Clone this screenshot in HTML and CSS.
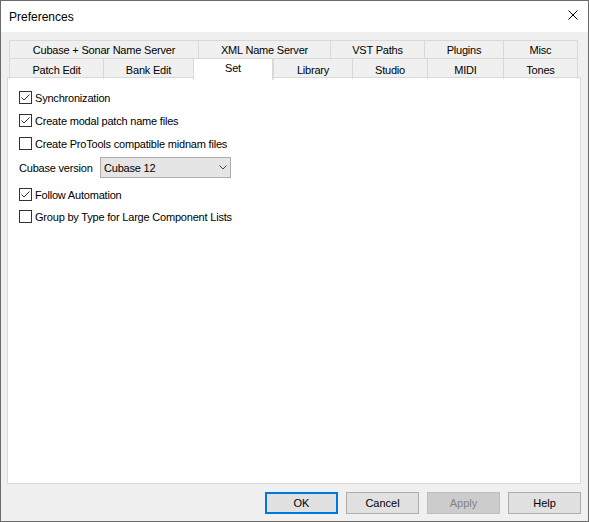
FILE: index.html
```html
<!DOCTYPE html>
<html>
<head>
<meta charset="utf-8">
<title>Preferences</title>
<link rel="stylesheet" href="styles.css">
</head>
<body>
<div class="window">
  <div class="titlebar">
    <span class="title">Preferences</span>
    <svg class="close" width="10" height="10" viewBox="0 0 10 10"><path d="M0.5 0.5 L9.5 9.5 M9.5 0.5 L0.5 9.5" stroke="#000" stroke-width="1" fill="none"/></svg>
  </div>
  <div class="content">
    <div class="tabs">
      <div class="tabrow row1">
        <div class="tab">Cubase + Sonar Name Server</div>
        <div class="tab">XML Name Server</div>
        <div class="tab">VST Paths</div>
        <div class="tab">Plugins</div>
        <div class="tab last">Misc</div>
      </div>
      <div class="tabrow row2">
        <div class="tab">Patch Edit</div>
        <div class="tab">Bank Edit</div>
        <div class="tab selected">Set</div>
        <div class="tab">Library</div>
        <div class="tab">Studio</div>
        <div class="tab">MIDI</div>
        <div class="tab last">Tones</div>
      </div>
    </div>
    <div class="panel">
      <div class="check r1">
        <span class="box"><svg width="11" height="11" viewBox="0 0 11 11"><path d="M1.5 5.5 L4 8 L9.5 2.5" stroke="#333" stroke-width="1" fill="none"/></svg></span>
        <span>Synchronization</span>
      </div>
      <div class="check r2">
        <span class="box"><svg width="11" height="11" viewBox="0 0 11 11"><path d="M1.5 5.5 L4 8 L9.5 2.5" stroke="#333" stroke-width="1" fill="none"/></svg></span>
        <span>Create modal patch name files</span>
      </div>
      <div class="check r3">
        <span class="box"></span>
        <span>Create ProTools compatible midnam files</span>
      </div>
      <div class="combo-row">
        <span class="combo-label">Cubase version</span>
        <div class="combo">
          <span>Cubase 12</span>
          <svg class="chev" width="8" height="5" viewBox="0 0 8 5"><path d="M0.5 0.5 L4 4 L7.5 0.5" stroke="#444" stroke-width="1" fill="none"/></svg>
        </div>
      </div>
      <div class="check r4">
        <span class="box"><svg width="11" height="11" viewBox="0 0 11 11"><path d="M1.5 5.5 L4 8 L9.5 2.5" stroke="#333" stroke-width="1" fill="none"/></svg></span>
        <span>Follow Automation</span>
      </div>
      <div class="check r5">
        <span class="box"></span>
        <span>Group by Type for Large Component Lists</span>
      </div>
    </div>
    <div class="buttons">
      <button class="btn default">OK</button>
      <button class="btn">Cancel</button>
      <button class="btn disabled">Apply</button>
      <button class="btn">Help</button>
    </div>
  </div>
</div>
</body>
</html>
```
FILE: styles.css
```css
* { box-sizing: border-box; }
html, body { margin: 0; padding: 0; }
body {
  width: 589px;
  height: 522px;
  background: #3c3c3c;
  font-family: "Liberation Sans", Arial, sans-serif;
  font-size: 11px;
  letter-spacing: -0.2px;
  color: #000;
  overflow: hidden;
}
.window {
  width: 589px;
  height: 522px;
  border: 1px solid #6b6b6b;
  background: #f0f0f0;
  display: flex;
  flex-direction: column;
}
.titlebar {
  height: 31px;
  background: #fff;
  display: flex;
  align-items: center;
  padding-left: 8px;
  flex: none;
}
.title { font-size: 12px; letter-spacing: 0; }
.close {
  margin-left: auto;
  margin-right: 10px;
  align-self: flex-start;
  margin-top: 9px;
}
.content {
  flex: 1;
  padding: 8px 7px 0 6px;
}
.tabs { margin-left: 2px; }
.tabrow { display: grid; }
.row1 {
  grid-template-columns: 189px 132px 94px 79px 75px;
  height: 18px;
}
.row2 {
  grid-template-columns: 94px 90px 80px 79px 75px 76px 75px;
  height: 19px;
}
.tab {
  border-top: 1px solid #d9d9d9;
  border-left: 1px solid #d9d9d9;
  display: flex;
  align-items: center;
  justify-content: center;
  height: 100%;
  white-space: nowrap;
  padding-top: 1px;
}
.tab.last { border-right: 1px solid #d9d9d9; }
.tab.selected {
  background: #fff;
  border-right: 1px solid #d9d9d9;
  align-self: end;
  height: 22px;
  margin-bottom: -1px;
  padding-top: 0;
  padding-bottom: 3px;
  position: relative;
  z-index: 1;
}
.panel {
  height: 407px;
  width: 574px;
  background: #fff;
  border: 1px solid #d9d9d9;
  padding: 13px 0 0 11px;
  display: flex;
  flex-direction: column;
}
.check {
  display: flex;
  align-items: center;
  height: 13px;
  white-space: nowrap;
}
.box {
  width: 13px;
  height: 13px;
  border: 1px solid #333;
  background: #fff;
  margin-right: 3px;
  flex: none;
  display: flex;
}
.r2, .r3 { margin-top: 10px; }
.combo-row {
  display: flex;
  align-items: center;
  margin-top: 7px;
  height: 21px;
}
.combo-label { width: 81px; }
.combo {
  width: 131px;
  height: 21px;
  background: #e5e5e5;
  border: 1px solid #adadad;
  display: flex;
  align-items: center;
  padding-left: 3px;
  padding-right: 3px;
}
.chev { margin-left: auto; }
.r4 { margin-top: 10px; }
.r5 { margin-top: 9px; }
.buttons {
  display: flex;
  justify-content: flex-end;
  gap: 8px;
  margin-top: 8px;
}
.btn {
  width: 73px;
  height: 22px;
  background: #e1e1e1;
  border: 1px solid #adadad;
  font-family: "Liberation Sans", Arial, sans-serif;
  font-size: 11px;
  letter-spacing: 0;
  color: #000;
  padding: 0;
  margin: 0;
}
.btn.default { border: 2px solid #0078d7; }
.btn.disabled {
  background: #cccccc;
  border-color: #bfbfbf;
  color: #838383;
}
```
